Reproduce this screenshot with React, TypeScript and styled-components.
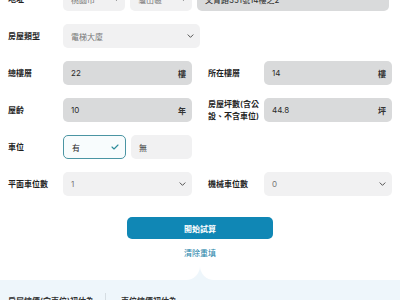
import React from "react";
import styled, { createGlobalStyle } from "styled-components";

const GlobalStyle = createGlobalStyle`
  html, body {
    margin: 0;
    padding: 0;
    background: #ffffff;
  }
  body {
    font-family: Inter, "Noto Sans CJK TC", "Noto Sans", sans-serif;
    color: #222;
    overflow: hidden;
  }
`;

const Page = styled.div`
  width: 400px;
  margin-top: -13px;
  background: #eef6fb;
`;

const Card = styled.div`
  background: #fff;
  padding: 0 8px 7px;
`;

const Form = styled.div`
  display: grid;
  row-gap: 13px;
`;

const Row = styled.div<{ $single?: boolean }>`
  display: grid;
  grid-template-columns: ${(p) => (p.$single ? "1fr" : "1fr 1fr")};
  column-gap: 16px;
`;

const Field = styled.div<{ $labelWidth?: number }>`
  display: grid;
  grid-template-columns: ${(p) => p.$labelWidth ?? 55}px 1fr;
  align-items: center;
  min-height: 24px;
`;

const Label = styled.div`
  font-size: 8px;
  line-height: 12px;
  font-weight: 600;
  color: #1f1f1f;
`;

const Box = styled.div<{ $tone: "filled" | "light" | "picked" }>`
  height: 24px;
  box-sizing: border-box;
  border-radius: 5px;
  display: flex;
  align-items: center;
  justify-content: space-between;
  padding: 0 6px 0 8px;
  font-size: 8px;
  background: ${(p) =>
    p.$tone === "filled" ? "#d9dadb" : p.$tone === "picked" ? "#f8fcfd" : "#f1f1f2"};
  border: ${(p) => (p.$tone === "picked" ? "1px solid #4b95a3" : "none")};
  color: #333;
`;

const Value = styled.span<{ $muted?: boolean }>`
  color: ${(p) => (p.$muted ? "#777" : "#2a2a2a")};
  white-space: nowrap;
`;

const Unit = styled.span`
  font-weight: 600;
  color: #333;
`;

const Chevron = ({ size = 7 }: { size?: number }) => (
  <svg width={size} height={size * 0.6} viewBox="0 0 8 5" fill="none">
    <path d="M1 1l3 3 3-3" stroke="#333" strokeWidth="1" strokeLinecap="round" strokeLinejoin="round" />
  </svg>
);

const Check = () => (
  <svg width="8" height="6" viewBox="0 0 8 6" fill="none">
    <path d="M1 3l2 2 4-4" stroke="#2c8c9b" strokeWidth="1.1" strokeLinecap="round" strokeLinejoin="round" />
  </svg>
);

const Pair = styled.div<{ $tail?: boolean }>`
  display: flex;
  gap: 5px;
  padding-right: ${(p) => (p.$tail ? 3 : 0)}px;
  & > * {
    flex: ${(p) => (p.$tail ? "0 0 62px" : "1")};
  }
  & > *:last-child {
    flex: 1;
  }
`;

const Wide = styled.div`
  width: 137px;
`;

const Actions = styled.div`
  display: flex;
  flex-direction: column;
  align-items: center;
  margin-top: 21px;
`;

const PrimaryButton = styled.button`
  width: 146px;
  height: 22px;
  border: none;
  border-radius: 5px;
  background: #1087b5;
  color: #fff;
  font-family: Inter, "Noto Sans CJK TC", sans-serif;
  font-size: 8px;
  font-weight: 700;
  cursor: pointer;
`;

const LinkButton = styled.button`
  margin-top: 8px;
  border: none;
  background: none;
  padding: 0;
  color: #1a82a8;
  font-family: Inter, "Noto Sans CJK TC", sans-serif;
  font-size: 8px;
  line-height: 12px;
  cursor: pointer;
`;

const CardFoot = styled.div`
  display: flex;
  height: 14px;
`;

const FootHalf = styled.div<{ $side: "left" | "right" }>`
  flex: 1;
  background: #fff;
  border-bottom-${(p) => (p.$side === "left" ? "right" : "left")}-radius: 14px;
`;

const Summary = styled.div`
  display: grid;
  grid-template-columns: 97px 1fr;
  padding: 13px 8px 10px;
`;

const SummaryCell = styled.div<{ $divided?: boolean }>`
  font-size: 8px;
  line-height: 12px;
  font-weight: 600;
  color: #333;
  padding-top: 2px;
  ${(p) => (p.$divided ? "border-left: 1px solid #d5dde2; padding-left: 15px;" : "")}
`;

export default function App() {
  return (
    <>
      <GlobalStyle />
      <Page>
        <Card>
          <Form>
            <Row $single>
              <Field>
                <Label>地址</Label>
                <Pair $tail>
                  <Box $tone="light">
                    <Value $muted>桃園市</Value>
                    <Chevron size={5} />
                  </Box>
                  <Box $tone="light">
                    <Value $muted>龜山區</Value>
                    <Chevron size={5} />
                  </Box>
                  <Box $tone="filled">
                    <Value>文青路351號14樓之2</Value>
                  </Box>
                </Pair>
              </Field>
            </Row>
            <Row>
              <Field>
                <Label>房屋類型</Label>
                <Wide>
                  <Box $tone="light">
                    <Value $muted>電梯大廈</Value>
                    <Chevron />
                  </Box>
                </Wide>
              </Field>
            </Row>
            <Row>
              <Field>
                <Label>總樓層</Label>
                <Box $tone="filled">
                  <Value>22</Value>
                  <Unit>樓</Unit>
                </Box>
              </Field>
              <Field $labelWidth={56}>
                <Label>所在樓層</Label>
                <Box $tone="filled">
                  <Value>14</Value>
                  <Unit>樓</Unit>
                </Box>
              </Field>
            </Row>
            <Row>
              <Field>
                <Label>屋齡</Label>
                <Box $tone="filled">
                  <Value>10</Value>
                  <Unit>年</Unit>
                </Box>
              </Field>
              <Field $labelWidth={56}>
                <Label>房屋坪數(含公設、不含車位)</Label>
                <Box $tone="filled">
                  <Value>44.8</Value>
                  <Unit>坪</Unit>
                </Box>
              </Field>
            </Row>
            <Row>
              <Field>
                <Label>車位</Label>
                <Pair>
                  <Box $tone="picked">
                    <Value>有</Value>
                    <Check />
                  </Box>
                  <Box $tone="light">
                    <Value>無</Value>
                  </Box>
                </Pair>
              </Field>
            </Row>
            <Row>
              <Field>
                <Label>平面車位數</Label>
                <Box $tone="light">
                  <Value $muted>1</Value>
                  <Chevron />
                </Box>
              </Field>
              <Field $labelWidth={56}>
                <Label>機械車位數</Label>
                <Box $tone="light">
                  <Value $muted>0</Value>
                  <Chevron />
                </Box>
              </Field>
            </Row>
          </Form>
          <Actions>
            <PrimaryButton>開始試算</PrimaryButton>
            <LinkButton>清除重填</LinkButton>
          </Actions>
        </Card>
        <CardFoot>
          <FootHalf $side="left" />
          <FootHalf $side="right" />
        </CardFoot>
        <Summary>
          <SummaryCell>房屋總價(含車位)初估為</SummaryCell>
          <SummaryCell $divided>車位總價初估為</SummaryCell>
        </Summary>
      </Page>
    </>
  );
}
